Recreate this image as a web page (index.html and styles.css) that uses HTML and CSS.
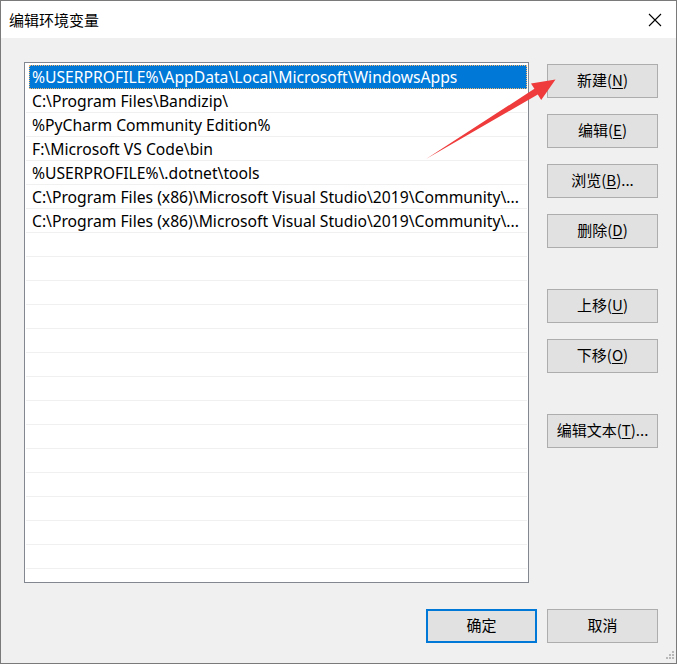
FILE: index.html
```html
<!DOCTYPE html>
<html lang="zh-CN">
<head>
<meta charset="utf-8">
<title>编辑环境变量</title>
<link rel="stylesheet" href="styles.css">
</head>
<body>
<div class="window">
  <div class="titlebar">
    <span class="title">编辑环境变量</span>
    <svg class="close" width="14" height="14" viewBox="0 0 14 14"><path d="M1 1L13 13M13 1L1 13" stroke="#000" stroke-width="1.1" fill="none"/></svg>
  </div>
  <div class="body">
    <div class="main">
      <div class="list">
        <div class="row sel"><span class="txt">%USERPROFILE%\AppData\Local\Microsoft\WindowsApps</span></div>
        <div class="row"><span class="txt">C:\Program Files\Bandizip\</span></div>
        <div class="row"><span class="txt">%PyCharm Community Edition%</span></div>
        <div class="row"><span class="txt">F:\Microsoft VS Code\bin</span></div>
        <div class="row"><span class="txt">%USERPROFILE%\.dotnet\tools</span></div>
        <div class="row"><span class="txt">C:\Program Files (x86)\Microsoft Visual Studio\2019\Community\...</span></div>
        <div class="row"><span class="txt">C:\Program Files (x86)\Microsoft Visual Studio\2019\Community\...</span></div>
        <div class="row"></div><div class="row"></div><div class="row"></div><div class="row"></div>
        <div class="row"></div><div class="row"></div><div class="row"></div><div class="row"></div>
        <div class="row"></div><div class="row"></div><div class="row"></div><div class="row"></div>
        <div class="row"></div><div class="row"></div>
      </div>
      <div class="side">
        <div class="group">
          <button class="btn">新建(<u>N</u>)</button>
          <button class="btn">编辑(<u>E</u>)</button>
          <button class="btn">浏览(<u>B</u>)...</button>
          <button class="btn">删除(<u>D</u>)</button>
        </div>
        <div class="group">
          <button class="btn">上移(<u>U</u>)</button>
          <button class="btn">下移(<u>O</u>)</button>
        </div>
        <div class="group">
          <button class="btn">编辑文本(<u>T</u>)...</button>
        </div>
      </div>
    </div>
    <div class="footer">
      <button class="btn primary">确定</button>
      <button class="btn">取消</button>
    </div>
  </div>
  <svg class="arrow" width="677" height="664" viewBox="0 0 677 664"><polygon points="426,159 537.8,94.6 541.2,100 555.5,79.5 531,83.5 534.4,88.8" fill="#ef3b3b"/></svg>
  <svg class="grip" width="12" height="12" viewBox="0 0 12 12" fill="#b8b8b8">
    <rect x="9" y="1" width="2" height="2"/>
    <rect x="6" y="4" width="2" height="2"/><rect x="9" y="4" width="2" height="2"/>
    <rect x="3" y="7" width="2" height="2"/><rect x="6" y="7" width="2" height="2"/><rect x="9" y="7" width="2" height="2"/>
  </svg>
</div>
</body>
</html>
```

FILE: styles.css
```css
* { box-sizing: border-box; }
html, body { margin: 0; padding: 0; }
body {
  width: 677px;
  height: 664px;
  font-family: "Noto Sans", "Noto Sans CJK SC", sans-serif;
  color: #000;
  background: #f0f0f0;
}
.window {
  position: relative;
  width: 677px;
  height: 664px;
  border: 1px solid #7a7a7a;
  display: flex;
  flex-direction: column;
  background: #f0f0f0;
}
.titlebar {
  height: 37px;
  background: #fff;
  display: flex;
  align-items: center;
  justify-content: space-between;
  padding: 0 14px 0 8px;
  flex: none;
}
.title {
  font-size: 15px;
  font-family: "Noto Sans CJK SC", sans-serif;
  line-height: 1;
  padding-bottom: 1px;
}
.close { display: block; }
.body {
  flex: 1;
  display: flex;
  flex-direction: column;
  padding: 24px 18px 0 23px;
}
.main {
  display: flex;
  gap: 18px;
}
.list {
  width: 505px;
  height: 521px;
  border: 1px solid #828790;
  background: #fff;
  overflow: hidden;
  padding-top: 2px;
}
.row {
  height: 24px;
  margin: 0 1px;
  border-bottom: 1px solid #f0f0f0;
  display: flex;
  align-items: center;
  font-size: 15.7px;
  white-space: nowrap;
}
.row .txt {
  display: block;
  padding-left: 6px;
  width: 494px;
  overflow: hidden;
}
.row.sel {
  border-bottom-color: #fff;
}
.row.sel .txt {
  margin-left: 3px;
  padding-left: 3px;
  width: 500px;
  height: 24px;
  line-height: 24px;
  background: #0078d7;
  color: #fff;
  outline: 1px dotted #f5b56a;
  outline-offset: -1px;
}
.side {
  display: flex;
  flex-direction: column;
  gap: 41px;
  padding-top: 2px;
}
.group {
  display: flex;
  flex-direction: column;
  gap: 16px;
}
.btn {
  width: 111px;
  height: 34px;
  background: #e1e1e1;
  border: 1px solid #adadad;
  font-family: "Noto Sans CJK SC", sans-serif;
  font-size: 15px;
  color: #000;
  padding: 0 0 4px 0;
  margin: 0;
  line-height: 1;
}
.btn u { text-underline-offset: 2px; }
.btn.primary {
  border: 2px solid #0078d7;
}
.footer {
  display: flex;
  justify-content: flex-end;
  gap: 10px;
  margin-top: 26px;
}
.arrow {
  position: absolute;
  left: -1px;
  top: -1px;
  pointer-events: none;
}
.grip {
  position: absolute;
  right: 1px;
  bottom: 1px;
}
```
